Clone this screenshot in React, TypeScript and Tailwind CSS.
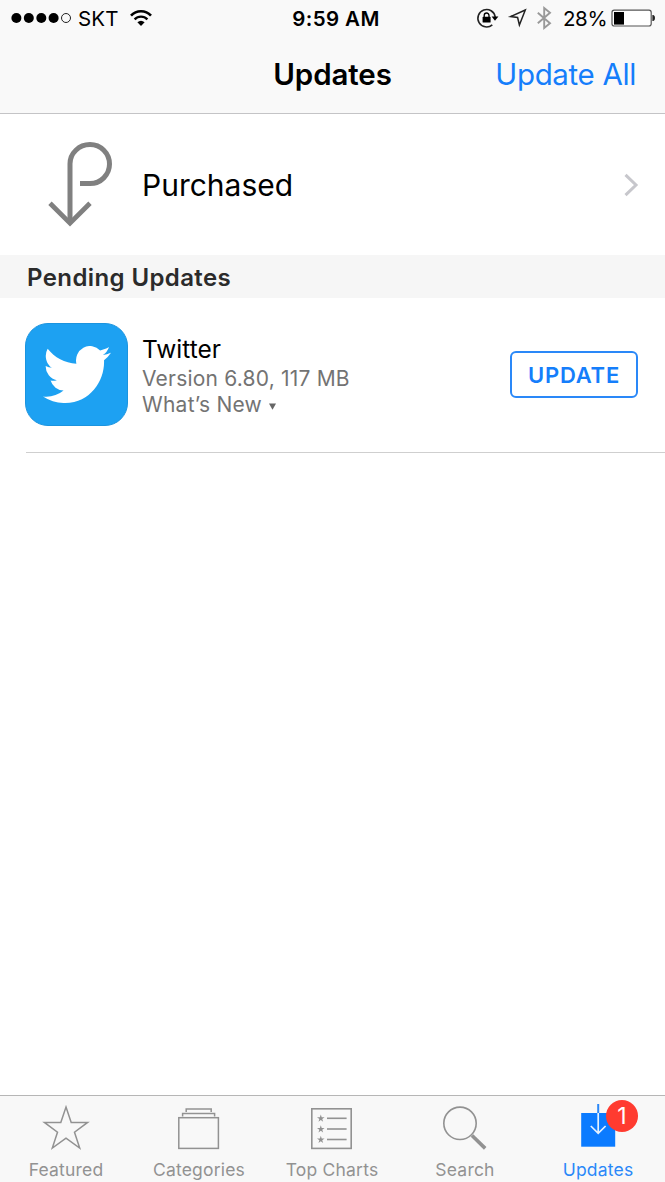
import React from "react";

function SignalAndWifi() {
  return (
    <div className="flex flex-1 items-center pl-[11px]">
      <svg className="h-[12px] w-[61px]" viewBox="11 12 61 12">
        {[16.4, 28.8, 41.3, 53.6].map((x) => (
          <circle key={x} cx={x} cy="18" r="5" fill="#000" />
        ))}
        <circle cx="66" cy="18" r="4.5" fill="none" stroke="#222" strokeWidth="1" />
      </svg>
      <span className="ml-[6px] w-[52px] pt-px text-[20.5px] leading-9 tracking-[0.1px]">SKT</span>
      <svg className="h-[18px] w-[22px]" viewBox="0 0 22 18" fill="none" stroke="#000">
        <path d="M1 6.6C6.4.7 15.6.7 21 6.6" strokeWidth="2.6" />
        <path d="M4.6 10.4C8.2 6.6 13.8 6.6 17.4 10.4" strokeWidth="2.3" />
        <path d="M11 17L7.4 13.3Q11 10.2 14.6 13.3Z" fill="#000" stroke="none" />
      </svg>
    </div>
  );
}

function StatusIcons() {
  return (
    <div className="flex flex-1 items-center justify-end pr-[9px]">
      <svg className="h-[24px] w-[78px]" viewBox="476 6 78 24" fill="none">
        <path d="M492.3 24.8A8.7 8.7 0 1 1 495.2 17" stroke="#222" strokeWidth="1.6" />
        <path d="M491.6 16.6H498.4L495 20.8Z" fill="#000" />
        <rect x="482.6" y="16.8" width="8" height="5.8" rx=".6" fill="#000" />
        <path d="M484.2 17V15.6A2.4 2.6 0 0 1 489 15.6V17" stroke="#000" strokeWidth="1.3" />
        <path d="M525.3 10L510.6 16.6L517.6 17.5L519.4 25Z" stroke="#222" strokeWidth="1.5" />
        <path d="M537.8 12.7L550 23.3L544.2 28V8L550 12.7L537.8 23.3" stroke="#999" strokeWidth="1.9" />
      </svg>
      <span className="ml-[9px] w-[48px] pt-px text-[20.5px] leading-9 tracking-[-0.4px]">28%</span>
      <svg className="h-[20px] w-[45px]" viewBox="611 8 45 20">
        <rect x="612" y="10.2" width="39.2" height="15.8" rx="2.2" fill="#fff" stroke="#555" strokeWidth="1.2" />
        <rect x="614" y="12" width="10" height="12.6" fill="#000" />
        <path d="M652.4 15H653.4Q655 15.6 655 18Q655 20.4 653.4 21H652.4Z" fill="#222" />
      </svg>
    </div>
  );
}

function Header() {
  return (
    <header className="h-[114px] shrink-0 border-b border-[#c4c4c6] bg-[#f9f9f9]">
      <div className="flex h-9 items-center">
        <SignalAndWifi />
        <span className="w-[104px] whitespace-nowrap pl-[5px] pt-px text-center text-[20.5px] font-semibold leading-9 tracking-[0.4px]">
          9:59 AM
        </span>
        <StatusIcons />
      </div>
      <div className="grid h-[77px] grid-cols-[1fr_auto_1fr] items-center">
        <span />
        <h1 className="text-[29.5px] font-semibold tracking-[-0.1px]">Updates</h1>
        <button className="justify-self-end pr-[29px] text-[29.5px] tracking-[-0.35px] text-[#157efb]">Update All</button>
      </div>
    </header>
  );
}

function PurchasedRow() {
  return (
    <div className="flex h-[141px] shrink-0 items-center pl-[46px] pr-[26px]">
      <svg className="h-[90px] w-[70px]" viewBox="46 139.7 70 90" fill="none" stroke="#808080">
        <path d="M70 222V163.5A20 19.2 0 0 1 90 144.3A19.5 19.5 0 0 1 90 183.3H80" strokeWidth="5" />
        <path d="M50 203L70 222.8L90 203" strokeWidth="4.8" />
      </svg>
      <span className="ml-[26px] flex-1 pt-px text-[30px]">Purchased</span>
      <svg className="h-[24px] w-[16px]" viewBox="623 173 16 24" fill="none">
        <path d="M625.5 174.8L636 185L625.5 195.2" stroke="#c7c7cc" strokeWidth="3" />
      </svg>
    </div>
  );
}

function AppRow() {
  return (
    <div className="ml-[26px] flex h-[155px] shrink-0 border-b border-[#cfcfcf] pr-[27px]">
      <div className="-ml-px mt-[25px] flex size-[103px] items-center justify-center rounded-[23px] border border-[#1b94df] bg-[#1da1f2]">
        <svg className="h-[57px] w-[68px]" viewBox="0 2.25 24 19.5" preserveAspectRatio="none" fill="#fff">
          <path d="M23.953 4.57a10 10 0 01-2.825.775 4.958 4.958 0 002.163-2.723c-.951.555-2.005.959-3.127 1.184a4.92 4.92 0 00-8.384 4.482C7.69 8.095 4.067 6.13 1.64 3.162a4.822 4.822 0 00-.666 2.475c0 1.71.87 3.213 2.188 4.096a4.904 4.904 0 01-2.228-.616v.06a4.923 4.923 0 003.946 4.827 4.996 4.996 0 01-2.212.085 4.936 4.936 0 004.604 3.417 9.867 9.867 0 01-6.102 2.105c-.39 0-.779-.023-1.17-.067a13.995 13.995 0 007.557 2.209c9.053 0 13.998-7.496 13.998-13.985 0-.21 0-.42-.015-.63A9.935 9.935 0 0024 4.59z" />
        </svg>
      </div>
      <div className="ml-[14px] flex flex-1 flex-col pt-[35px]">
        <span className="text-[24.5px] leading-[32px]">Twitter</span>
        <span className="text-[21px] leading-[27px] tracking-[0.2px] text-[#737373]">Version 6.80, 117 MB</span>
        <span className="flex items-center text-[21px] leading-[26px] tracking-[0.25px] text-[#737373]">
          What’s New
          <svg className="ml-[7px] mt-[3px] h-[7px] w-[7px]" viewBox="0 0 7 7" fill="#666">
            <path d="M0 .5H7L3.5 6.7Z" />
          </svg>
        </span>
      </div>
      <button className="mt-[53px] h-[47px] w-[128px] rounded-[6px] border-2 border-[#2a88f8] pt-px text-[22px] font-semibold tracking-[0.8px] text-[#157efb]">
        UPDATE
      </button>
    </div>
  );
}

const STAR = "M0-1L.2245-.309H.951L.363.118.588.809 0 .382-.588.809-.363.118-.951-.309H-.2245Z";

function FeaturedIcon() {
  return (
    <svg className="h-[50px] w-[60px]" viewBox="36 1102 60 50" fill="none" stroke="#929292" strokeWidth="1.5">
      <path d="M66 1107L71.2 1122.4H87.6L74.5 1132.2L79.7 1148L66 1138.2L52.3 1148L57.5 1132.2L44.4 1122.4H60.8Z" />
    </svg>
  );
}

function CategoriesIcon() {
  return (
    <svg className="h-[50px] w-[60px]" viewBox="169 1102 60 50" fill="none" stroke="#929292" strokeWidth="1.5">
      <rect x="178.8" y="1117.7" width="39.6" height="30.7" />
      <path d="M182.6 1116.5V1113.5H214.6V1116.5M186.2 1112V1109H211.2V1112" />
    </svg>
  );
}

function ChartsIcon() {
  return (
    <svg className="h-[50px] w-[60px]" viewBox="302 1102 60 50" fill="none" stroke="#929292" strokeWidth="1.6">
      <rect x="311.8" y="1108.8" width="39.4" height="39.6" />
      {[1118.3, 1129, 1139.5].map((y) => (
        <React.Fragment key={y}>
          <path d={`M327 ${y}H346.6`} />
          <path d={STAR} transform={`translate(320.8 ${y + 0.2}) scale(4)`} fill="#929292" stroke="none" />
        </React.Fragment>
      ))}
    </svg>
  );
}

function SearchIcon() {
  return (
    <svg className="h-[50px] w-[60px]" viewBox="435 1102 60 50" fill="none" stroke="#929292">
      <circle cx="460" cy="1123.3" r="16.2" strokeWidth="1.6" />
      <path d="M472 1135.5L485.2 1148.4" strokeWidth="3.6" />
    </svg>
  );
}

function UpdatesIcon() {
  return (
    <div className="relative h-[50px] w-[60px]">
      <svg className="h-[50px] w-[60px]" viewBox="568 1102 60 50" fill="none">
        <rect x="581.2" y="1113" width="34" height="33.7" fill="#0b7bff" />
        <path d="M598.2 1104V1113" stroke="#2a88f8" strokeWidth="2" />
        <path d="M598.2 1113V1133.5M590.8 1126L598.2 1133.3L605.6 1126" stroke="#e4f1ff" strokeWidth="1.7" />
      </svg>
      <span className="absolute -top-[2px] left-[38px] flex size-[32px] items-center justify-center rounded-full bg-[#ff3b30] text-[23px] text-white">
        1
      </span>
    </div>
  );
}

const TABS = [
  { label: "Featured", icon: <FeaturedIcon /> },
  { label: "Categories", icon: <CategoriesIcon /> },
  { label: "Top Charts", icon: <ChartsIcon /> },
  { label: "Search", icon: <SearchIcon /> },
  { label: "Updates", icon: <UpdatesIcon />, active: true },
];

export default function App() {
  return (
    <div className="flex h-[1182px] w-[665px] flex-col overflow-hidden bg-white font-['Inter',sans-serif] text-black">
      <Header />
      <PurchasedRow />
      <h2 className="h-[43px] shrink-0 bg-[#f6f6f6] pl-[27px] text-[24px] font-semibold leading-[46px] tracking-[0.4px] text-[#2b2b2b]">
        Pending Updates
      </h2>
      <AppRow />
      <div className="flex-1" />
      <nav className="grid h-[87px] shrink-0 grid-cols-5 border-t border-[#b6b6b6] bg-[#f8f8f8]">
        {TABS.map((tab) => (
          <div key={tab.label} className="flex flex-col items-center pr-px pt-[6px]">
            {tab.icon}
            <span
              className={
                tab.active
                  ? "whitespace-nowrap text-[17.5px] leading-9 tracking-[0.2px] text-[#2a88f8]"
                  : "whitespace-nowrap text-[17.5px] leading-9 tracking-[0.2px] text-[#929292]"
              }
            >
              {tab.label}
            </span>
          </div>
        ))}
      </nav>
    </div>
  );
}
